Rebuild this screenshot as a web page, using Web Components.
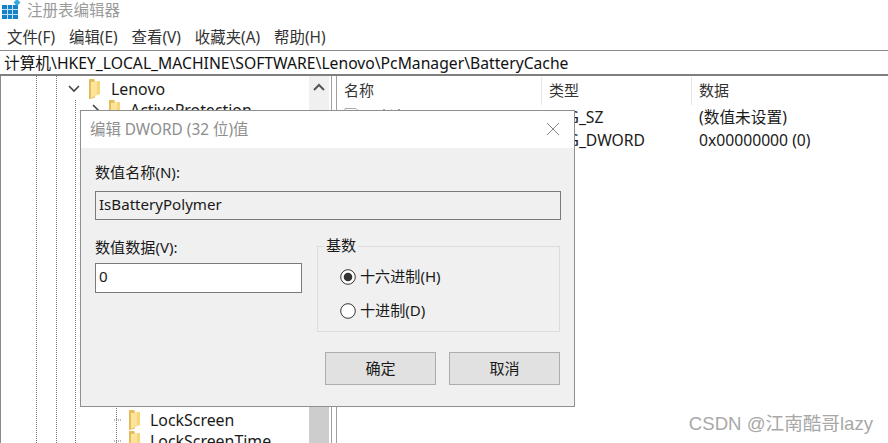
<!DOCTYPE html>
<html><head><meta charset="utf-8">
<style>
html,body{margin:0;padding:0;width:888px;height:443px;overflow:hidden;background:#fff}
body{font:15px "Noto Sans","Noto Sans CJK SC",sans-serif;color:#1a1a1a;position:relative}
</style></head><body>
<reg-window></reg-window>
<edit-dialog></edit-dialog>
<csdn-mark>CSDN @江南酷哥lazy</csdn-mark>
<script>
const FONT='"Noto Sans","Noto Sans CJK SC",sans-serif';
const def=(name,html,init)=>customElements.define(name,class extends HTMLElement{
  connectedCallback(){ if(this.shadowRoot) return; const r=this.attachShadow({mode:'open'}); r.innerHTML=html(this); init&&init(r,this);}
});
const folder=`<svg width="13" height="20" viewBox="0 0 13 20"><path d="M1 0h5l1 1.500v17L2 20H1z" fill="#e6bd5c"/><path d="M3 3l9 -1v13l-9 4z" fill="#fce49a"/><path d="M9 2h3v13l-3 1z" fill="#f8d77c"/></svg>`;
const doc=`<svg width="18" height="18" viewBox="0 0 18 18"><path d="M1 .5h11l4 4v13H1z" fill="#fff" stroke="#aaa"/></svg>`;
def('tree-row',h=>`<style>:host{display:flex;align-items:center;height:21px;white-space:nowrap;font:15.9px ${FONT};color:#1a1a1a}
.c{width:14px;height:14px;margin-right:6px;flex:none}svg{flex:none}span{margin-left:9px}
:host(.l1) .c{margin-right:7px}:host(.l1) span{margin-left:10px}
</style><svg class="c" viewBox="0 0 14 14" fill="none" stroke="#444" stroke-width="1.6">${h.getAttribute('exp')==='down'?'<path d="M2 4l5 5 5-5"/>':h.getAttribute('exp')==='right'?'<path d="M5 2l5 5-5 5"/>':'<path d="M6 7h8" stroke="#777" stroke-width="1" stroke-dasharray="1 1"/>'}</svg>${folder}<span><slot></slot></span>`);
def('reg-window',()=>`<style>
:host{display:flex;flex-direction:column;width:888px;height:443px;overflow:hidden;font:15.7px ${FONT};color:#1a1a1a}
.title{height:19px;padding-bottom:5px;display:flex;align-items:center;gap:5px;padding-left:2px;color:#9b9b9b;font-size:15.5px;flex:none}
.menu{height:24px;padding-bottom:2px;display:flex;align-items:center;gap:14px;padding-left:7px;font-size:15.4px;color:#333;flex:none}
.addr{height:23px;flex:none;border:1px solid #7f7f7f;border-width:1px 0 2px;border-top-color:#8a8a8a;display:flex;align-items:center;padding-left:4px;color:#111;white-space:nowrap}
.panes{flex:1;display:flex;min-height:0}
.tree{width:309px;flex:none;position:relative;overflow:hidden;padding-top:2px;border-left:1px solid #8a8a8a;box-sizing:border-box;display:flex;flex-direction:column}
.tree tree-row.l1{margin-left:66px}.tree tree-row.l2{margin-left:87px}.tree tree-row.l3{margin-left:107px}
.fill{flex:1}
.g{position:absolute;top:0;bottom:0;width:0;border-left:1px dotted #777}
.sb{width:20px;flex:none;background:#f0f0f0;display:flex;flex-direction:column}
.sb .up{height:22px;display:flex;align-items:center;justify-content:center}
.sb .th{margin-top:auto;height:60px;background:#cdcdcd}
.split{width:6px;flex:none;box-sizing:border-box;border-left:1px solid #a0a0a0;border-right:1px solid #a0a0a0;margin-left:2px}
.list{flex:1;display:flex;flex-direction:column;min-width:0;padding-top:1px}
.hd,.r{display:grid;grid-template-columns:205px 150px 1fr;align-items:center;white-space:nowrap}
.hd{height:28px;font-size:15px;color:#333}
.hd>div{padding-left:7px;height:28px;box-sizing:border-box;padding-bottom:3px;display:flex;align-items:center;border-right:1px solid #e5e5e5}
.hd>div:last-child{border:0}
.r{height:24px}.r>div{padding-left:7px;padding-bottom:2px;display:flex;align-items:center;gap:6px}
</style>
<div class="title"><svg width="20" height="21" viewBox="0 0 20 21"><path d="M0 6h16v14H0z" fill="#1683c9"/><path d="M0 10.500h16M0 15.500h16M5.500 6v14M10.500 6v14" stroke="#bfe3f5" stroke-width="1"/><path d="M15 0l3.500 3.500L15 7l-3.500-3.500z" fill="#36a9de"/></svg><span>注册表编辑器</span></div>
<div class="menu"><span>文件(F)</span><span>编辑(E)</span><span>查看(V)</span><span>收藏夹(A)</span><span>帮助(H)</span></div>
<div class="addr">计算机\\HKEY_LOCAL_MACHINE\\SOFTWARE\\Lenovo\\PcManager\\BatteryCache</div>
<div class="panes">
 <div class="tree">
  <i class="g" style="left:35px"></i><i class="g" style="left:55px"></i><i class="g" style="left:74px;top:24px"></i><i class="g" style="left:115px;top:320px"></i>
  <tree-row class="l1" exp="down">Lenovo</tree-row>
  <tree-row class="l2" exp="right">ActiveProtection</tree-row>
  <div class="fill"></div>
  <tree-row class="l3">LockScreen</tree-row>
  <tree-row class="l3" style="margin-bottom:-8px">LockScreenTime</tree-row>
 </div>
 <div class="sb"><div class="up"><svg width="12" height="8" viewBox="0 0 12 8" fill="none" stroke="#555" stroke-width="2"><path d="M1 7l5-5 5 5"/></svg></div><div class="th"></div></div>
 <div class="split"></div>
 <div class="list">
  <div class="hd"><div>名称</div><div>类型</div><div>数据</div></div>
  <div class="r"><div>${doc}(默认)</div><div>REG_SZ</div><div>(数值未设置)</div></div>
  <div class="r"><div>${doc}IsBatteryPolymer</div><div>REG_DWORD</div><div>0x00000000 (0)</div></div>
 </div>
</div>`);
def('edit-dialog',()=>`<style>
:host{position:absolute;left:80px;top:110px;width:495px;height:297px;box-sizing:border-box;border:1px solid #8f8f8f;background:#f0f0f0;display:flex;flex-direction:column;font:15.1px ${FONT};color:#1a1a1a}
.tb{height:37px;flex:none;background:#fff;display:flex;align-items:center;justify-content:space-between;padding:0 14px 2px 9px;box-sizing:border-box;color:#8e8e8e;font-size:15.4px}
.body{flex:1;padding:12px 14px 0;display:flex;flex-direction:column}
.lbl{height:24px;box-sizing:border-box;padding-bottom:3px;display:flex;align-items:center}
.name{height:29px;box-sizing:border-box;border:1px solid #7a7a7a;background:#f0f0f0;margin-top:7px;padding:0 0 4px 3px;display:flex;align-items:center;width:466px}
.mid{display:flex;margin-top:15px;gap:15px}
.left{width:207px;flex:none}
.val{height:30px;box-sizing:border-box;border:1px solid #7a7a7a;background:#fff;margin-top:4px;padding:0 0 4px 3px;display:flex;align-items:center}
.base{width:243px;position:relative;box-sizing:border-box;height:86px;margin-top:11px;border:1px solid #dcdcdc;padding:17px 0 0 22px;display:flex;flex-direction:column;gap:9px}
.base b{font-weight:400;position:absolute;left:6px;top:-10px;background:#f0f0f0;padding:0 2px;line-height:17px}
.opt{display:flex;align-items:center;gap:4px;height:25px}
.opt span{padding-bottom:3px}
.btns{display:flex;justify-content:flex-end;gap:13px;margin-top:20px}
.btn{width:111px;height:33px;box-sizing:border-box;border:1px solid #adadad;background:#e1e1e1;padding-bottom:4px;display:flex;align-items:center;justify-content:center}
</style>
<div class="tb"><span>编辑 DWORD (32 位)值</span><svg width="14" height="14" viewBox="0 0 14 14" stroke="#888" stroke-width="1"><path d="M1 1l12 12M13 1L1 13"/></svg></div>
<div class="body">
 <div class="lbl">数值名称(N):</div>
 <div class="name">IsBatteryPolymer</div>
 <div class="mid">
  <div class="left"><div class="lbl">数值数据(V):</div><div class="val">0</div></div>
  <div class="base"><b>基数</b>
   <div class="opt"><svg width="16" height="16" viewBox="0 0 16 16"><circle cx="8" cy="8" r="7.300" fill="#fff" stroke="#333"/><circle cx="8" cy="8" r="4.300" fill="#333"/></svg><span>十六进制(H)</span></div>
   <div class="opt"><svg width="16" height="16" viewBox="0 0 16 16"><circle cx="8" cy="8" r="7.300" fill="#fff" stroke="#333"/></svg><span>十进制(D)</span></div>
  </div>
 </div>
 <div class="btns"><div class="btn">确定</div><div class="btn">取消</div></div>
</div>`);
def('csdn-mark',()=>`<style>:host{position:absolute;right:15px;top:408px;font:18.6px "Liberation Sans","Noto Sans CJK SC",sans-serif;color:#a8a8a8;white-space:nowrap}</style><slot></slot>`);
</script>
</body></html>
